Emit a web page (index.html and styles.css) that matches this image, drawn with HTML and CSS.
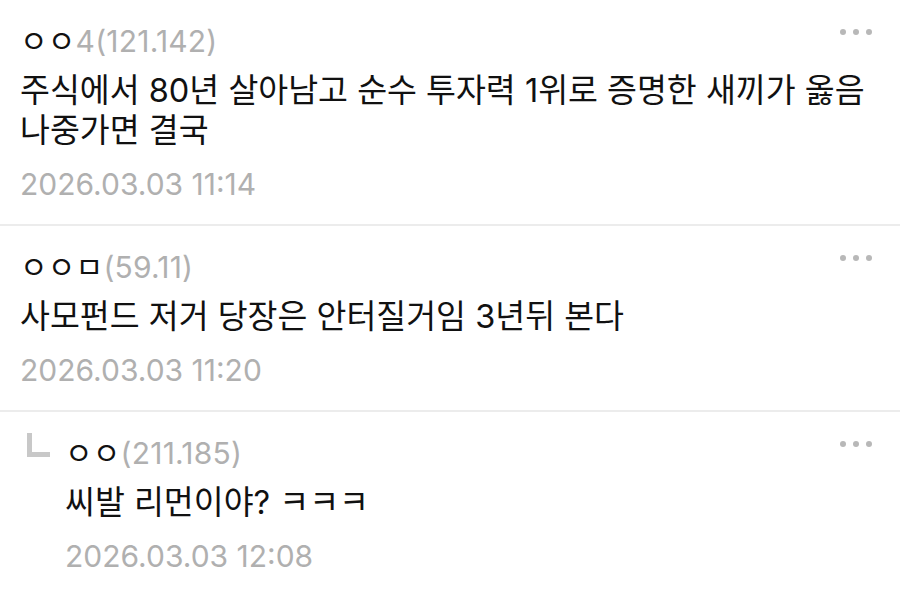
FILE: index.html
```html
<!DOCTYPE html>
<html lang="ko">
<head>
    <meta charset="UTF-8">
    <meta name="viewport" content="width=device-width, initial-scale=1.0">
    <title>댓글</title>
    <link rel="stylesheet" href="styles.css">
</head>
<body>
    <ul class="comments">
        <li class="comment">
            <div class="content">
                <div class="head">
                    <div class="writer"><span class="nick">ㅇㅇ</span><span class="ip">4(121.142)</span></div>
                    <button class="more" type="button"><i></i><i></i><i></i></button>
                </div>
                <p class="text">주식에서 80년 살아남고 순수 투자력 1위로 증명한 새끼가 옳음<br>나중가면 결국</p>
                <div class="date">2026.03.03 11:14</div>
            </div>
        </li>
        <li class="comment">
            <div class="content">
                <div class="head">
                    <div class="writer"><span class="nick">ㅇㅇㅁ</span><span class="ip">(59.11)</span></div>
                    <button class="more" type="button"><i></i><i></i><i></i></button>
                </div>
                <p class="text">사모펀드 저거 당장은 안터질거임 3년뒤 본다</p>
                <div class="date">2026.03.03 11:20</div>
            </div>
        </li>
        <li class="comment reply">
            <span class="reply-mark"></span>
            <div class="content">
                <div class="head">
                    <div class="writer"><span class="nick">ㅇㅇ</span><span class="ip">(211.185)</span></div>
                    <button class="more" type="button"><i></i><i></i><i></i></button>
                </div>
                <p class="text">씨발 리먼이야? ㅋㅋㅋ</p>
                <div class="date">2026.03.03 12:08</div>
            </div>
        </li>
    </ul>
</body>
</html>
```

FILE: styles.css
```css
body {
    margin: 0;
    background-color: #fff;
    color: #111;
    font-family: "Inter", "Noto Sans CJK KR", sans-serif;
}

.comments {
    list-style: none;
    margin: 0;
    padding: 0;
}

.comment {
    display: flex;
    align-items: flex-start;
    padding: 23px 28px 22px 20px;
    border-bottom: 2px solid #ececec;
}

.comment:last-child {
    border-bottom: none;
}

.content {
    flex: 1;
}

.head {
    display: flex;
    justify-content: space-between;
    align-items: flex-start;
}

.writer {
    font-size: 30px;
    line-height: 36px;
    letter-spacing: 0.2px;
}

.nick {
    color: #111;
}

.ip {
    color: #b0b0b0;
}

.text {
    margin: 12px -20px 0 0;
    font-size: 32.5px;
    line-height: 40px;
}

.date {
    margin-top: 15px;
    font-size: 30px;
    line-height: 36px;
    color: #b0b0b0;
}

.more {
    display: flex;
    gap: 7px;
    margin-top: 6px;
    padding: 0;
    border: none;
    background: none;
}

.more i {
    width: 6px;
    height: 6px;
    border-radius: 50%;
    background-color: #b8b8b8;
}

.reply-mark {
    width: 18px;
    height: 19px;
    margin: -2px 15px 0 7px;
    border-left: 5px solid #c8c8c8;
    border-bottom: 5px solid #c8c8c8;
}
```
